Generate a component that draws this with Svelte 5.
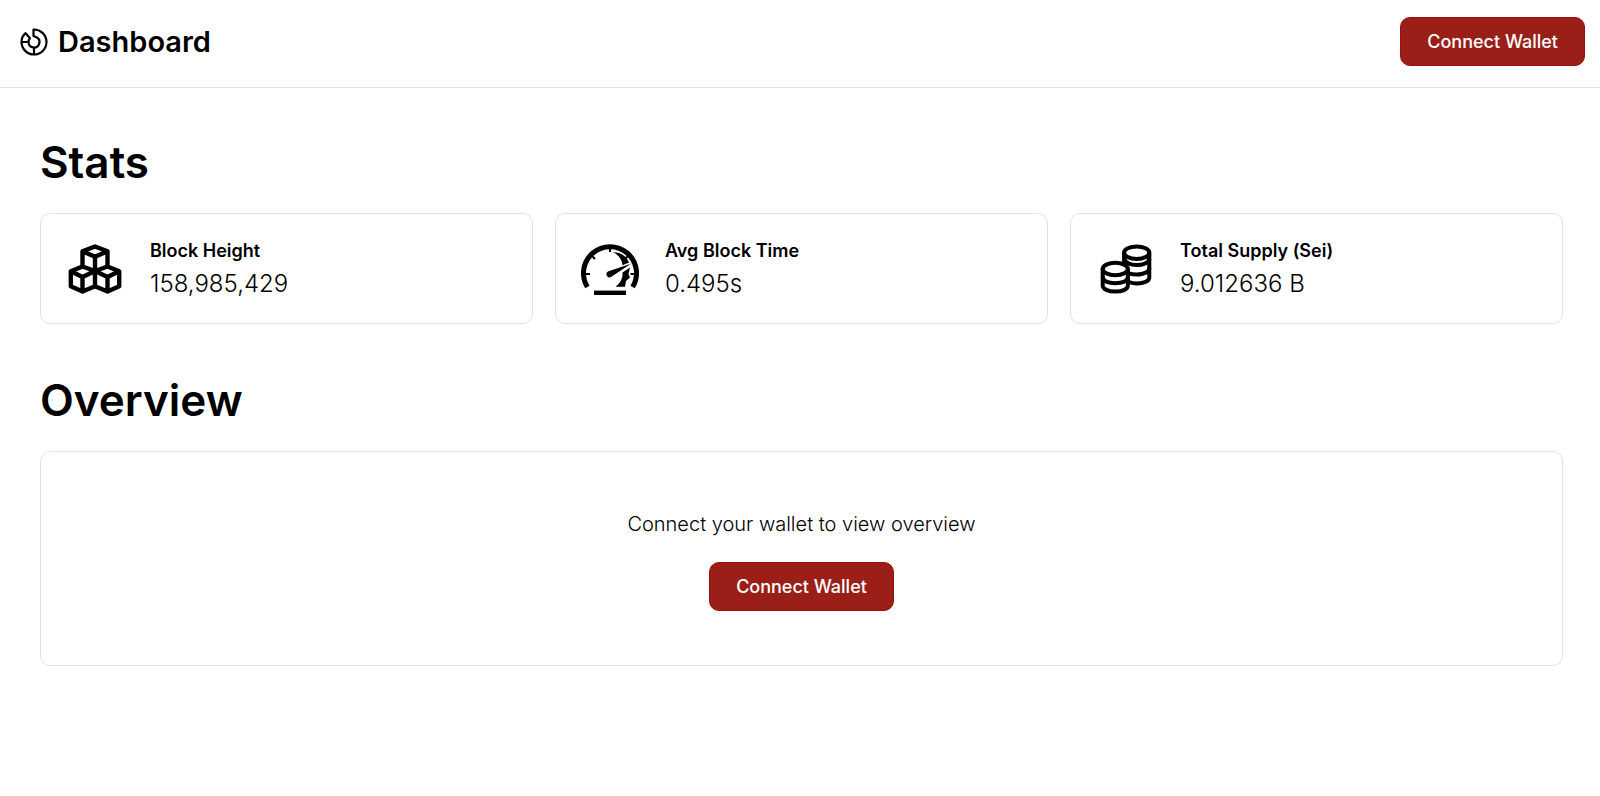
<script>
	let connecting = $state(false);

	const stats = [
		{ icon: 'blocks', label: 'Block Height', value: '158,985,429' },
		{ icon: 'gauge', label: 'Avg Block Time', value: '0.495s' },
		{ icon: 'coins', label: 'Total Supply (Sei)', value: '9.012636 B' }
	];

	function connectWallet() {
		connecting = true;
	}
</script>

{#snippet connectButton()}
	<button class="connect" type="button" onclick={connectWallet} aria-busy={connecting}>
		Connect Wallet
	</button>
{/snippet}

<header class="topbar">
	<div class="brand">
		<svg class="logo" viewBox="0 0 28 28" aria-hidden="true">
			<path d="M13.5 1.5A12.5 12.5 0 1 1 1.5 14C1.5 10.6 3 7.4 5.6 5.2L10 10.2Q8.4 11.8 8.6 14A5.4 5.4 0 1 0 16.5 9.3L13.5 8Z" />
			<path d="M1.5 14H8.6M14 19.5V26.5" />
		</svg>
		<h1>Dashboard</h1>
	</div>
	{@render connectButton()}
</header>

<main>
	<section>
		<h2>Stats</h2>
		<div class="stats">
			{#each stats as stat}
				<div class="card stat">
					<svg class="stat-icon" viewBox="0 0 60 60" aria-hidden="true">
						{#if stat.icon === 'blocks'}
							<g class="line">
								<path d="M16.5 27.5V12.3L29 7.5L41.5 12.3V27.5M16.5 12.3L29 17.8L41.5 12.3M29 17.8V32" />
								<path d="M4.8 32.3L16.5 27.5L29 32L16.5 38ZM4.8 32.3V47.2L16.5 52.5L29 47.2V32M16.5 38V52.5" />
								<path d="M29 32L41.5 27.5L53.2 32.3L41.5 38ZM53.2 32.3V47.2L41.5 52.5L29 47.2M41.5 38V52.5" />
							</g>
						{:else if stat.icon === 'gauge'}
							<path class="dial" d="M6.4 48A26.5 26.5 0 1 1 51.6 48" />
							<path class="tick" d="M29 8V13M4 35H9M49.5 35H54M10.5 16.5L14 20M47.5 16.5L44.5 19.5" />
							<path d="M32 13.3C42 13.5 46 19 48 23.5L41.5 26.3C41 20 37 15.5 32 13.3Z" />
							<path d="M27.5 32.2L50 24.7L30.7 37.6A3.2 3.2 0 1 1 27.5 32.2Z" />
							<path d="M49 28.5L47.5 35L49 38.5L45 42L44 47.7H34.5C39.5 44 42 39 41.5 33.5Z" />
							<rect x="13" y="51.6" width="32" height="4.4" />
						{:else}
							<g class="line coin">
								<ellipse cx="40.7" cy="13.7" rx="12.6" ry="6.2" />
								<path d="M28.1 13.7V24M53.3 13.7V38.5C53.3 42 48 44.5 41 44.5C38 44.5 35.5 44 33 43" />
								<path d="M28.1 20C30 24.5 36 26 40.7 26C47 26 53.3 23.5 53.3 20" />
								<path d="M33 34.5C42 37 53.3 34.5 53.3 29" />
								<ellipse cx="19.3" cy="30" rx="12.6" ry="6.2" />
								<path d="M6.7 30V46.5C6.7 50 12 52.6 19.3 52.6S31.9 50 31.9 46.5V30" />
								<path d="M6.7 38C6.7 42 12 44.2 19.3 44.2S31.9 42 31.9 38" />
							</g>
						{/if}
					</svg>
					<dl>
						<dt>{stat.label}</dt>
						<dd>{stat.value}</dd>
					</dl>
				</div>
			{/each}
		</div>
	</section>

	<section>
		<h2>Overview</h2>
		<div class="card overview">
			<p>Connect your wallet to view overview</p>
			{@render connectButton()}
		</div>
	</section>
</main>

<style>
	:global(body) {
		margin: 0;
		background: #fff;
		color: #000;
		font-family: Inter, 'Liberation Sans', sans-serif;
	}

	.topbar {
		display: flex;
		align-items: center;
		justify-content: space-between;
		padding: 17px 15px 21px 20px;
		border-bottom: 1px solid #e5e5e5;
	}

	.brand {
		display: flex;
		align-items: center;
		gap: 10px;
	}

	.logo {
		width: 28px;
		height: 28px;
		fill: none;
		stroke: #000;
		stroke-width: 2.2;
		stroke-linejoin: round;
	}

	h1,
	h2,
	dl,
	dd,
	p {
		margin: 0;
	}

	h1 {
		font-size: 29px;
		line-height: 40px;
		font-weight: 600;
	}

	.connect {
		padding: 0 26px;
		border: 1px solid #9a0f0b;
		border-radius: 10px;
		background: #9b1f19;
		color: #fff;
		font-family: inherit;
		font-size: 18px;
		font-weight: 500;
		line-height: 47px;
		cursor: pointer;
	}

	.connect:hover {
		background: #87170f;
	}

	main {
		display: flex;
		flex-direction: column;
		gap: 50px;
		padding: 48px 37px 48px 40px;
	}

	h2 {
		margin-bottom: 24px;
		font-size: 44px;
		line-height: 53px;
		font-weight: 600;
	}

	.stats {
		display: grid;
		grid-template-columns: repeat(3, 1fr);
		gap: 22px;
	}

	.card {
		border: 1px solid #dfe3e8;
		border-radius: 10px;
	}

	.stat {
		display: flex;
		align-items: center;
		gap: 24px;
		padding: 22px 25px;
	}

	.stat-icon {
		flex: none;
		width: 60px;
		height: 60px;
	}

	.line {
		fill: none;
		stroke: #000;
		stroke-width: 4.4;
		stroke-linejoin: round;
	}

	.coin {
		stroke-width: 4;
		stroke-linecap: round;
	}

	.dial {
		fill: none;
		stroke: #000;
		stroke-width: 5;
	}

	.tick {
		fill: none;
		stroke: #000;
		stroke-width: 2;
	}

	dt {
		font-size: 18px;
		line-height: 30px;
		font-weight: 600;
	}

	dd {
		font-size: 24px;
		line-height: 35px;
		font-weight: 300;
	}

	.overview {
		display: flex;
		flex-direction: column;
		align-items: center;
		gap: 20px;
		padding: 54px 24px;
	}

	.overview p {
		font-size: 20px;
		line-height: 36px;
		font-weight: 300;
	}
</style>
